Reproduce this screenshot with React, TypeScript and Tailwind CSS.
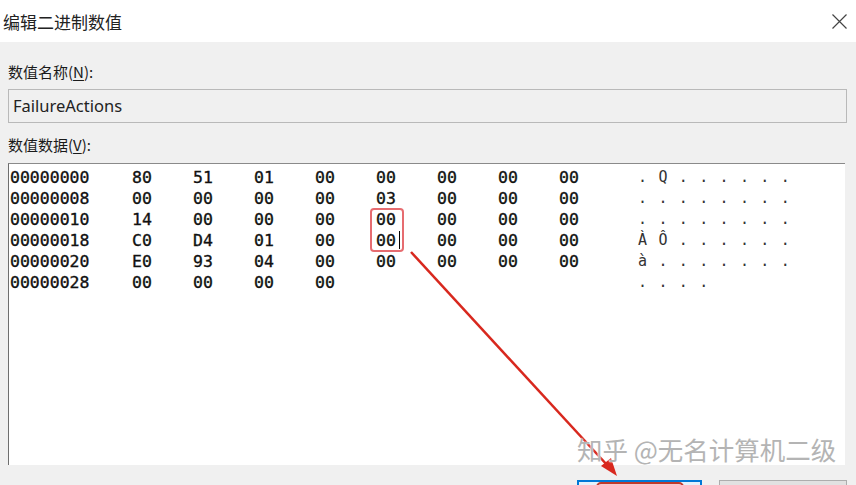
import React from 'react';

type HexRow = {
  addr: string;
  bytes: string[];
  chars: string[];
};

const dots = (n: number) => Array.from({ length: n }, () => '.');

const rows: HexRow[] = [
  { addr: '00000000', bytes: ['80', '51', '01', '00', '00', '00', '00', '00'], chars: ['.', 'Q', ...dots(6)] },
  { addr: '00000008', bytes: ['00', '00', '00', '00', '03', '00', '00', '00'], chars: dots(8) },
  { addr: '00000010', bytes: ['14', '00', '00', '00', '00', '00', '00', '00'], chars: dots(8) },
  { addr: '00000018', bytes: ['C0', 'D4', '01', '00', '00', '00', '00', '00'], chars: ['À', 'Ô', ...dots(6)] },
  { addr: '00000020', bytes: ['E0', '93', '04', '00', '00', '00', '00', '00'], chars: ['à', ...dots(7)] },
  { addr: '00000028', bytes: ['00', '00', '00', '00'], chars: dots(4) },
];

const cjk = "font-['Microsoft_YaHei','Noto_Sans_CJK_SC',sans-serif]";
const mono = "font-['DejaVu_Sans_Mono',monospace]";

const App = () => {
  return (
    <div className="relative w-[856px] h-[485px] overflow-hidden bg-[#f0f0f0] text-[#1a1a1a]">
      {/* Title bar */}
      <div className="flex h-[42px] items-center justify-between bg-white pl-[3px] pr-[9px]">
        <span className={`${cjk} text-[17px] leading-none text-[#222]`}>编辑二进制数值</span>
        <svg width="15" height="15" viewBox="0 0 15 15" className="mt-[1px]">
          <path d="M0.5 0.5 L14.5 14.5 M14.5 0.5 L0.5 14.5" stroke="#444" strokeWidth="1.2" fill="none" />
        </svg>
      </div>

      {/* Body */}
      <div className="flex flex-col pl-[8px] pr-[9px]">
        <div className={`${cjk} mt-[20px] text-[15px] leading-[20px]`}>
          数值名称(<span className="underline underline-offset-2">N</span>):
        </div>
        <div className="mt-[7px] flex h-[34px] items-center border border-[#b9b9b9] bg-[#f0f0f0] pl-[4px]">
          <span className="font-['Noto_Sans',sans-serif] text-[16.5px] text-[#222]">FailureActions</span>
        </div>
        <div className={`${cjk} mt-[12px] text-[15px] leading-[20px]`}>
          数值数据(<span className="underline underline-offset-2">V</span>):
        </div>

        {/* Hex editor */}
        <div className="mt-[8px] mr-[2px] h-[302px] border-t border-l border-t-[#8a8a8a] border-l-[#6e6e6e] bg-white pt-[3px] pl-[1px]">
          {rows.map((row) => (
            <div
              key={row.addr}
              className={`flex h-[21px] items-center ${mono} text-[16.5px] leading-[21px] text-[#111]`}
            >
              <span className="w-[122px] [-webkit-text-stroke:0.35px_#111]">{row.addr}</span>
              {row.bytes.map((b, i) => (
                <span key={i} className="w-[61px] [-webkit-text-stroke:0.35px_#111]">{b}</span>
              ))}
              {row.bytes.length < 8 && <span style={{ width: (8 - row.bytes.length) * 61 }} />}
              <span className="ml-[18px] flex">
                {row.chars.map((c, i) => (
                  <span key={i} className="w-[20.4px] text-[15px] text-[#333]">{c}</span>
                ))}
              </span>
            </div>
          ))}
        </div>

        {/* Buttons */}
        <div className="mt-[15px] flex justify-end gap-[17px]">
          <div className="flex h-[30px] w-[125px] justify-center border-2 border-[#0078d7] bg-[#e5f1fb]">
            <div className="h-[26px] w-[88px] rounded-[5px] border-2 border-[#c0392b] bg-[#f6c9cf]" />
          </div>
          <div className="h-[30px] w-[128px] border border-[#adadad] bg-[#e1e1e1]" />
        </div>
      </div>

      {/* Annotation: red box and caret */}
      <div className="absolute left-[370px] top-[208px] h-[44px] w-[34px] rounded-[4px] border-2 border-[#e0474c]/80" />
      <div className="absolute left-[399px] top-[231px] h-[18px] w-[1px] bg-black" />

      {/* Annotation arrow */}
      <svg className="pointer-events-none absolute left-0 top-0" width="856" height="485">
        <line x1="411" y1="252" x2="608" y2="466" stroke="#d8281e" strokeWidth="2.5" />
        <polygon points="617,476 601,466 611,458" fill="#d8281e" />
      </svg>

      {/* Watermark */}
      <div
        className={`${cjk} absolute left-[577px] top-[436px] text-[25.5px] leading-none text-[#b4b4b4] [text-shadow:0_0_2px_#fff,0_0_1px_#fff]`}
      >
        知乎 @无名计算机二级
      </div>
    </div>
  );
};

export default App;
